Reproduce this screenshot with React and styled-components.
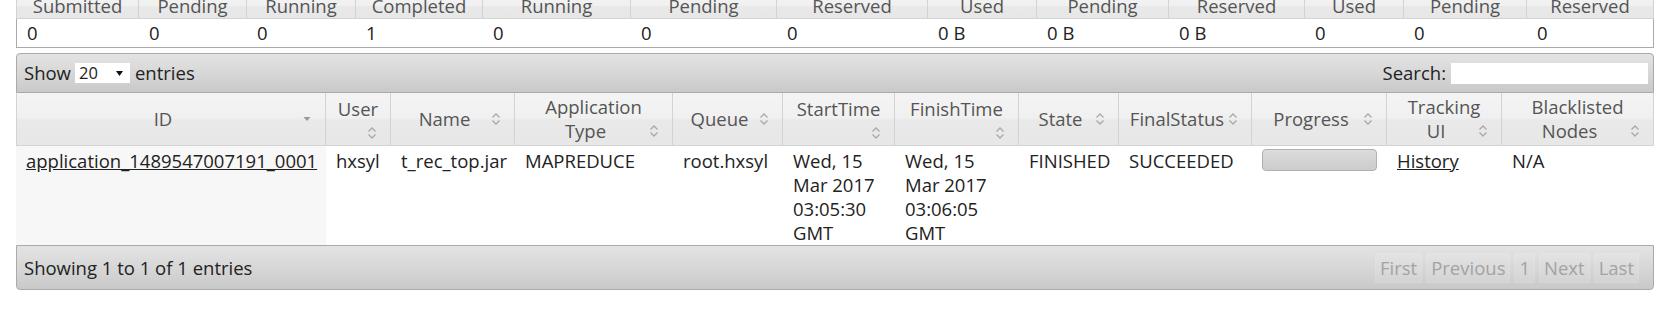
import React from 'react';
import styled, { createGlobalStyle } from 'styled-components';

const GlobalStyle = createGlobalStyle`
  html, body {
    margin: 0;
    padding: 0;
    background: #fff;
  }
  body {
    font-family: "Open Sans", "Noto Sans", sans-serif;
    font-size: 18.5px;
    line-height: 24px;
    color: #222;
    overflow: hidden;
  }
`;

const Page = styled.div`
  width: 1638px;
  padding: 0 2px 0 16px;
`;

const glass = `linear-gradient(to bottom, #f4f4f4 0%, #f0f0f0 48%, #e9e9e9 52%, #e7e7e7 100%)`;
const barGradient = `linear-gradient(to bottom, #e3e3e3 0%, #d6d6d6 55%, #c9c9c9 100%)`;

const MetricsTable = styled.table`
  width: 1638px;
  margin-top: -6px;
  border-spacing: 0;
  table-layout: fixed;
`;

const MetricsHead = styled.th`
  height: 24px;
  padding: 0 10px;
  font-weight: normal;
  color: #555;
  text-align: center;
  white-space: nowrap;
  overflow: hidden;
  background: ${glass};
  border-right: 1px solid #d3d3d3;
  border-bottom: 1px solid #d3d3d3;
  &:first-child {
    border-left: 1px solid #d3d3d3;
  }
`;

const MetricsValue = styled.td`
  padding: 2px 10px;
  background: #fff;
  border-bottom: 1px solid #aaa;
  white-space: nowrap;
  &:first-child {
    border-left: 1px solid #aaa;
  }
  &:last-child {
    border-right: 1px solid #aaa;
  }
`;

const Toolbar = styled.div`
  box-sizing: border-box;
  height: ${(p) => p.$height}px;
  margin-top: ${(p) => p.$top || 0}px;
  display: flex;
  align-items: center;
  justify-content: space-between;
  padding: 0 ${(p) => p.$right}px 0 7px;
  border: 1px solid #aaa;
  border-radius: ${(p) => (p.$bottom ? '0 0 4px 4px' : '4px 4px 0 0')};
  background: ${barGradient};
  color: #222;
`;

const Group = styled.div`
  display: flex;
  align-items: center;
`;

const PageSize = styled.span`
  box-sizing: border-box;
  width: 55px;
  height: 20px;
  margin: 0 5px 0 4px;
  padding: 0 7px 0 4px;
  display: flex;
  align-items: center;
  justify-content: space-between;
  background: #fff;
  font-size: 16.5px;
  line-height: 20px;
`;

const SearchInput = styled.input`
  box-sizing: border-box;
  width: 197px;
  height: 21px;
  margin-left: 5px;
  padding: 0 4px;
  border: none;
  outline: none;
  background: #fff;
  font: inherit;
`;

const AppTable = styled.table`
  width: 1638px;
  border-spacing: 0;
  table-layout: fixed;
`;

const Head = styled.th`
  padding: 2px 10px;
  font-weight: normal;
  color: #555;
  text-align: center;
  vertical-align: middle;
  background: ${glass};
  border-right: 1px solid #d3d3d3;
  border-bottom: 1px solid #d3d3d3;
  &:first-child {
    border-left: 1px solid #d3d3d3;
  }
`;

const SortWrap = styled.div`
  display: flow-root;
`;

const SortIcon = styled.span`
  float: right;
  width: 16px;
  height: 16px;
  margin-top: 4px;
  display: block;
  svg {
    display: block;
  }
`;

const Cell = styled.td`
  padding: 3px 10px 0;
  vertical-align: top;
  white-space: nowrap;
  background: ${(p) => (p.$sorted ? '#f7f7f7' : '#fff')};
`;

const Link = styled.a`
  color: #222;
  text-decoration: underline;
`;

const Progress = styled.div`
  box-sizing: border-box;
  height: 22px;
  border: 1px solid #b0b0b0;
  border-radius: 4px;
  background: linear-gradient(to bottom, #dcdcdc 0%, #d2d2d2 60%, #cccccc 100%);
`;

const Pager = styled.div`
  display: flex;
  gap: 4px;
`;

const PageButton = styled.span`
  padding: 2px 4px;
  color: #a3a3a3;
  background: rgba(255, 255, 255, 0.12);
  border: 1px solid rgba(255, 255, 255, 0.08);
  border-radius: 2px;
`;

const BothIcon = () => (
  <svg width="16" height="16" viewBox="0 0 16 16">
    <path d="M4.5 6.5 8 3l3.5 3.5M4.5 9.5 8 13l3.5-3.5" fill="none" stroke="#a9a9a9" strokeWidth="1.3" />
  </svg>
);

const DescIcon = () => (
  <svg width="16" height="16" viewBox="0 0 16 16">
    <path d="M4.5 6h7L8 10z" fill="#999" />
  </svg>
);

const metrics = [
  ['Submitted', '0', 123],
  ['Pending', '0', 108],
  ['Running', '0', 109],
  ['Completed', '1', 127],
  ['Running', '0', 148],
  ['Pending', '0', 146],
  ['Reserved', '0', 151],
  ['Used', '0 B', 109],
  ['Pending', '0 B', 132],
  ['Reserved', '0 B', 136],
  ['Used', '0', 99],
  ['Pending', '0', 123],
  ['Reserved', '0', 127],
];

const columns = [
  ['ID', 310, 'desc'],
  ['User', 65],
  ['Name', 124],
  ['Application Type', 158],
  ['Queue', 110],
  ['StartTime', 112],
  ['FinishTime', 124],
  ['State', 100],
  ['FinalStatus', 133],
  ['Progress', 135],
  ['Tracking UI', 115],
  ['Blacklisted Nodes', 152],
];

export default function App() {
  return (
    <Page>
      <GlobalStyle />
      <MetricsTable>
        <colgroup>
          {metrics.map(([, , w], i) => (
            <col key={i} style={{ width: w }} />
          ))}
        </colgroup>
        <thead>
          <tr>
            {metrics.map(([label], i) => (
              <MetricsHead key={i}>{label}</MetricsHead>
            ))}
          </tr>
        </thead>
        <tbody>
          <tr>
            {metrics.map(([, value], i) => (
              <MetricsValue key={i}>{value}</MetricsValue>
            ))}
          </tr>
        </tbody>
      </MetricsTable>

      <Toolbar $height={40} $top={5} $right={5}>
        <Group>
          Show
          <PageSize>
            20
            <svg width="7" height="5" viewBox="0 0 7 5">
              <path d="M0 0h7L3.5 5z" fill="#111" />
            </svg>
          </PageSize>
          entries
        </Group>
        <Group>
          Search:
          <SearchInput type="text" />
        </Group>
      </Toolbar>

      <AppTable>
        <colgroup>
          {columns.map(([, w], i) => (
            <col key={i} style={{ width: w }} />
          ))}
        </colgroup>
        <thead>
          <tr>
            {columns.map(([label, , sort]) => (
              <Head key={label}>
                <SortWrap>
                  {label}
                  <SortIcon>{sort === 'desc' ? <DescIcon /> : <BothIcon />}</SortIcon>
                </SortWrap>
              </Head>
            ))}
          </tr>
        </thead>
        <tbody>
          <tr>
            <Cell $sorted>
              <Link href="#">application_1489547007191_0001</Link>
            </Cell>
            <Cell>hxsyl</Cell>
            <Cell>t_rec_top.jar</Cell>
            <Cell>MAPREDUCE</Cell>
            <Cell>root.hxsyl</Cell>
            <Cell>
              Wed, 15
              <br />
              Mar 2017
              <br />
              03:05:30
              <br />
              GMT
            </Cell>
            <Cell>
              Wed, 15
              <br />
              Mar 2017
              <br />
              03:06:05
              <br />
              GMT
            </Cell>
            <Cell>FINISHED</Cell>
            <Cell>SUCCEEDED</Cell>
            <Cell>
              <Progress />
            </Cell>
            <Cell>
              <Link href="#">History</Link>
            </Cell>
            <Cell>N/A</Cell>
          </tr>
        </tbody>
      </AppTable>

      <Toolbar $height={45} $right={14} $bottom>
        <span>Showing 1 to 1 of 1 entries</span>
        <Pager>
          <PageButton>First</PageButton>
          <PageButton>Previous</PageButton>
          <PageButton>1</PageButton>
          <PageButton>Next</PageButton>
          <PageButton>Last</PageButton>
        </Pager>
      </Toolbar>
    </Page>
  );
}
